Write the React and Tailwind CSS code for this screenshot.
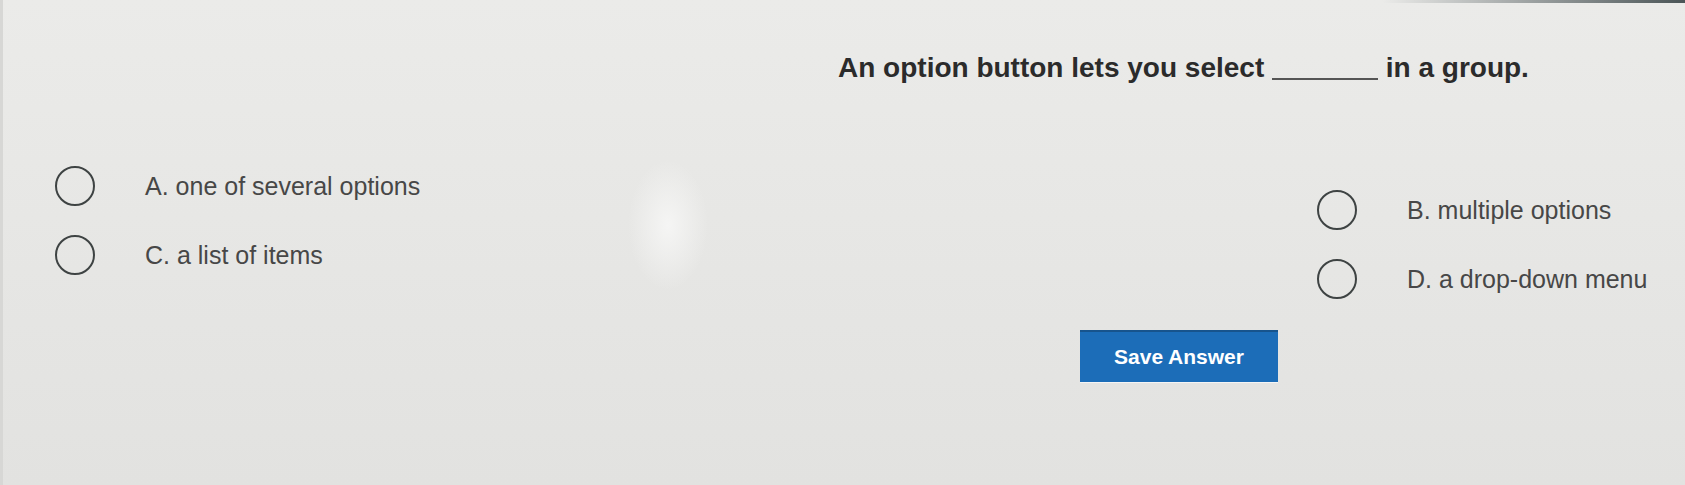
import React from "react"

const options = [
  { id: "A", label: "one of several options" },
  { id: "B", label: "multiple options" },
  { id: "C", label: "a list of items" },
  { id: "D", label: "a drop-down menu" },
]

function Option({ id, label }) {
  return (
    <label className="flex items-center h-10 cursor-pointer">
      <span className="w-10 h-10 shrink-0 rounded-full border-[2.5px] border-[#3e4343]" />
      <span className="ml-[50px] text-[25px] leading-none text-[#474747]">
        {id}. {label}
      </span>
    </label>
  )
}

export default function App() {
  const left = [options[0], options[2]]
  const right = [options[1], options[3]]

  return (
    <div
      className="min-h-screen overflow-hidden border-l-[3px] border-[#d7d7d5] bg-[radial-gradient(ellipse_40px_65px_at_665px_225px,#f5f5f4,transparent),linear-gradient(to_bottom,#ebebe9,#e2e2e0)]"
      style={{ fontFamily: '"Liberation Sans", Arial, sans-serif' }}
    >
      {/* top edge of the frame */}
      <div className="h-[3px] bg-[linear-gradient(to_right,transparent_82%,#4b5557)]" />

      {/* Pregunta */}
      <p className="mt-[49px] pl-[835px] text-[28px] leading-[32px] font-bold text-[#2b2b2b] whitespace-nowrap">
        An option button lets you select{" "}
        <span className="inline-block w-[106px] border-b-2 border-[#555] align-[-3px]" />{" "}
        in a group.
      </p>

      {/* Opciones */}
      <div className="mt-[82px] grid grid-cols-[1314px_1fr]">
        <div className="flex flex-col gap-[29px] pl-[52px]">
          {left.map((o) => (
            <Option key={o.id} {...o} />
          ))}
        </div>
        <div className="flex flex-col gap-[29px] pt-[24px]">
          {right.map((o) => (
            <Option key={o.id} {...o} />
          ))}
        </div>
      </div>

      <div className="mt-[31px] pl-[1077px]">
        <button className="w-[198px] h-[52px] bg-[#1c6db8] border-t-2 border-[#17548d] text-white text-[21px] font-bold shadow-[0_1px_0_#f5f5f5]">
          Save Answer
        </button>
      </div>
    </div>
  )
}
